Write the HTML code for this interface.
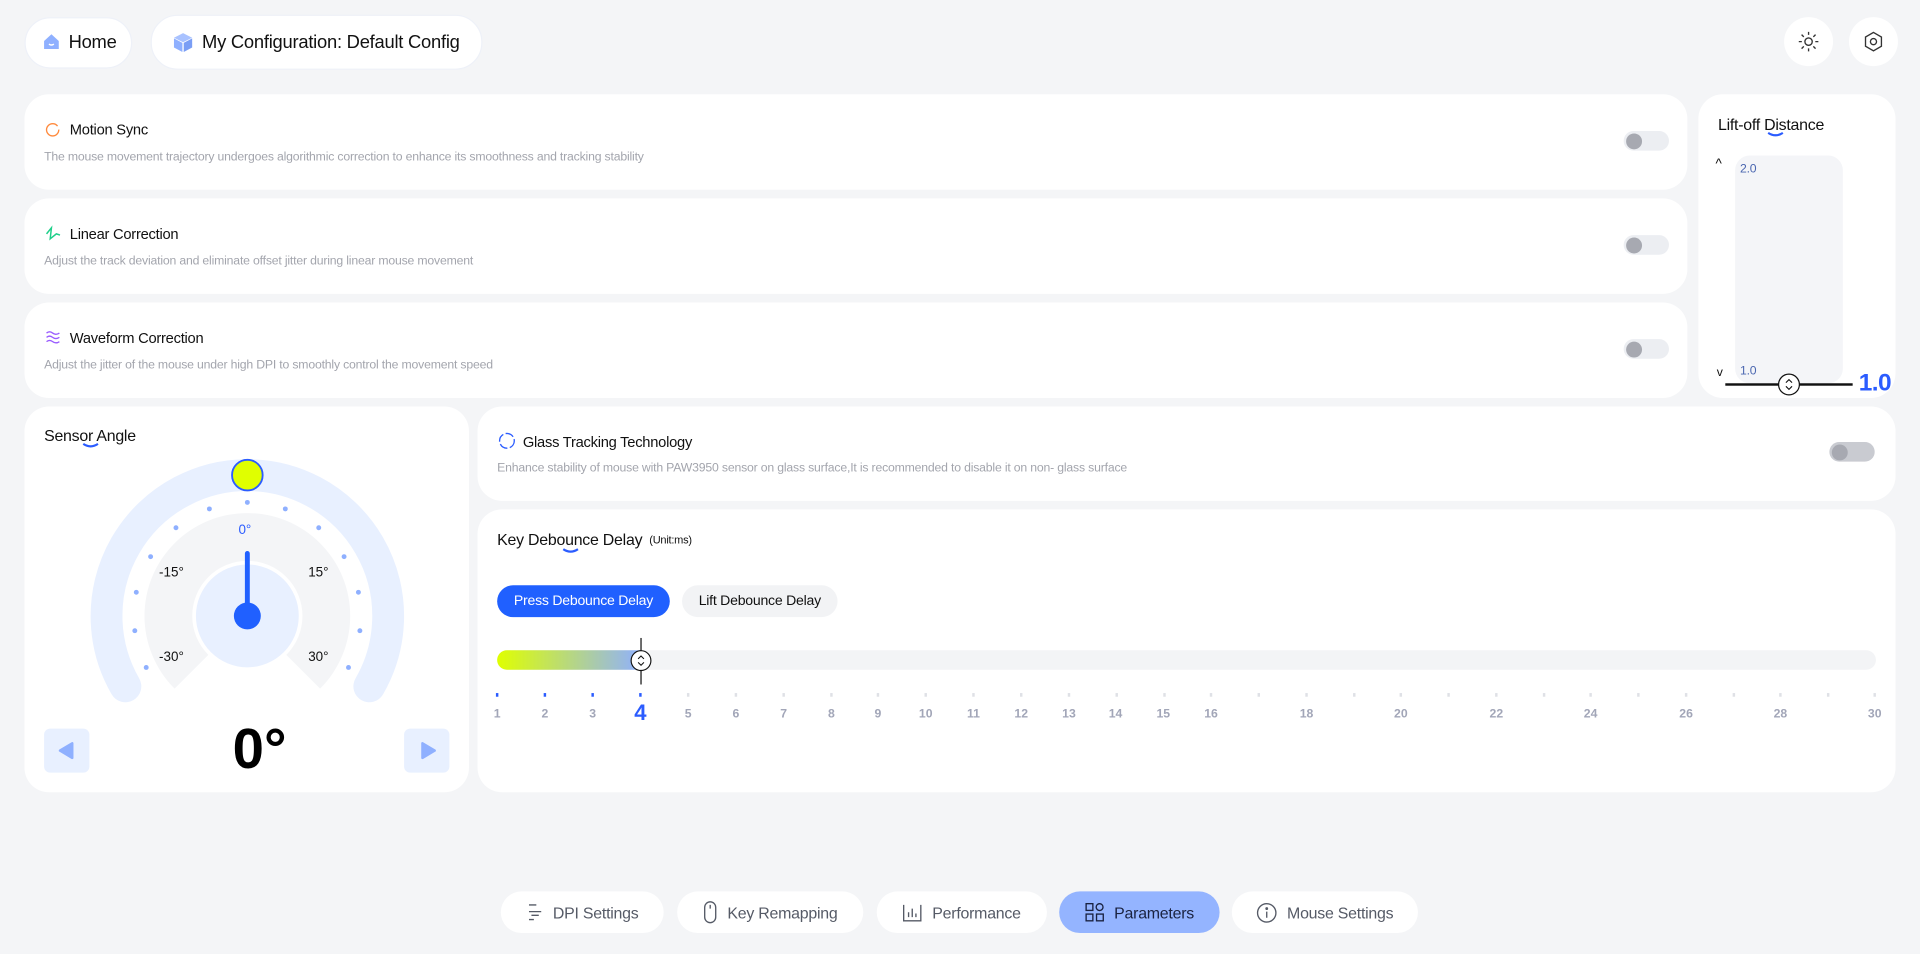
<!DOCTYPE html>
<html><head><meta charset="utf-8">
<style>
html,body{margin:0;padding:0;background:#f4f5f7;overflow:hidden}
body{width:1920px;height:953px}
#s{position:absolute;left:0;top:0;width:1568px;height:779px;transform:scale(1.22449);transform-origin:0 0;font-family:"Liberation Sans",sans-serif;color:#111}
.a{position:absolute}
.card{position:absolute;background:#fff;border-radius:20px}
.pill{position:absolute;background:#fff;border-radius:22px;border:1px solid #eef1f8;box-sizing:border-box}
.t{position:absolute;font-size:12px;white-space:nowrap;letter-spacing:-0.2px}
.d{position:absolute;font-size:10px;color:#a3a5ad;white-space:nowrap;letter-spacing:-0.15px}
.tg{position:absolute;width:37px;height:16px;border-radius:8px;background:#eceef2}
.tg::after{content:"";position:absolute;left:2px;top:1.5px;width:13px;height:13px;border-radius:50%;background:#a7a9b1}
.nav{position:absolute;top:728px;height:34px;background:#fff;border-radius:17px;font-size:13px;color:#555a66;display:flex;align-items:center;justify-content:center;gap:8px;letter-spacing:-0.2px}
.tk{position:absolute;top:578px;font-size:10px;font-weight:bold;color:#a2a6b8;transform:translateX(-50%)}
.tm{position:absolute;top:566px;width:1.5px;height:3px;background:#dfe1e6}
</style></head><body><div id="s">

<div class="pill" style="left:20px;top:14px;width:88px;height:42px"></div>
<svg class="a" style="left:35px;top:27px" width="14" height="14" viewBox="0 0 14 14"><path d="M7 1 L13 6.5 V13 H1 V6.5 Z" fill="#8fb0ff"/><path d="M5 9 Q7 10.5 9 9" stroke="#fff" stroke-width="1.2" fill="none"/></svg>
<div class="t" style="left:56px;top:26px;font-size:15px">Home</div>

<div class="pill" style="left:123px;top:12px;width:271px;height:45px"></div>
<svg class="a" style="left:141px;top:26px" width="17" height="17" viewBox="0 0 16 16"><path d="M8 1 L15 4.5 L8 8 L1 4.5Z" fill="#a9c2ff"/><path d="M1 5 L7.5 8.5 V15.5 L1 12Z" fill="#8fb0ff"/><path d="M15 5 L8.5 8.5 V15.5 L15 12Z" fill="#7a9ef5"/></svg>
<div class="t" style="left:165px;top:26px;font-size:15px">My Configuration: Default Config</div>

<div class="a" style="left:1457px;top:14px;width:40px;height:40px;border-radius:50%;background:#fff"></div>
<svg class="a" style="left:1467px;top:24px" width="20" height="20" viewBox="0 0 20 20" stroke="#333" stroke-width="1.1" fill="none"><circle cx="10" cy="10" r="3"/><path d="M10 2v2.5M10 15.5V18M2 10h2.5M15.5 10H18M4.3 4.3l1.8 1.8M13.9 13.9l1.8 1.8M4.3 15.7l1.8-1.8M13.9 6.1l1.8-1.8"/></svg>
<div class="a" style="left:1510px;top:14px;width:40px;height:40px;border-radius:50%;background:#fff"></div>
<svg class="a" style="left:1520px;top:24px" width="20" height="20" viewBox="0 0 20 20" stroke="#333" stroke-width="1.1" fill="none"><path d="M10 2.5 L16.5 6.25 V13.75 L10 17.5 L3.5 13.75 V6.25Z"/><circle cx="10" cy="10" r="2.5"/></svg>

<div class="card" style="left:20px;top:77px;width:1358px;height:78px"></div>
<svg class="a" style="left:37px;top:99px" width="12" height="13" viewBox="0 0 12 13"><circle cx="6" cy="7" r="5" stroke="#ff8a3d" stroke-width="1.1" fill="none" stroke-dasharray="28 3"/></svg>
<div class="t" style="left:57px;top:99px">Motion Sync</div>
<div class="d" style="left:36px;top:123px">The mouse movement trajectory undergoes algorithmic correction to enhance its smoothness and tracking stability</div>
<div class="tg" style="left:1326px;top:107px"></div>

<div class="card" style="left:20px;top:162px;width:1358px;height:78px"></div>
<svg class="a" style="left:37px;top:184px" width="13" height="13" viewBox="0 0 13 13" stroke="#1fcf8a" stroke-width="1.2" fill="none"><path d="M1 7 L5 2 L4 11 L9 7 L12 8"/></svg>
<div class="t" style="left:57px;top:184px">Linear Correction</div>
<div class="d" style="left:36px;top:208px">Adjust the track deviation and eliminate offset jitter during linear mouse movement</div>
<div class="tg" style="left:1326px;top:192px"></div>

<div class="card" style="left:20px;top:247px;width:1358px;height:78px"></div>
<svg class="a" style="left:37px;top:269px" width="13" height="13" viewBox="0 0 13 13" stroke="#9a5cff" stroke-width="1.1" fill="none"><path d="M1 3 Q3.5 1 6 3 T11.5 3M1 6.5 Q3.5 4.5 6 6.5 T11.5 6.5M1 10 Q3.5 8 6 10 T11.5 10"/></svg>
<div class="t" style="left:57px;top:269px">Waveform Correction</div>
<div class="d" style="left:36px;top:293px">Adjust the jitter of the mouse under high DPI to smoothly control the movement speed</div>
<div class="tg" style="left:1326px;top:277px"></div>

<div class="card" style="left:1387px;top:77px;width:161px;height:248px"></div>
<div class="t" style="left:1403px;top:94px;font-size:13px">Lift-off Distance</div>
<svg class="a" style="left:1442px;top:107px" width="16" height="6"><path d="M2 1.5 Q8 5.5 14 1.5" stroke="#2b5cff" stroke-width="1.8" fill="none"/></svg>
<div class="a" style="left:1417px;top:127px;width:88px;height:186px;background:#f4f5f8;border-radius:12px"></div>
<div class="t" style="left:1401px;top:128px;font-size:11px">^</div>
<div class="t" style="left:1402px;top:299px;font-size:10px">v</div>
<div class="t" style="left:1421px;top:133px;font-size:10px;color:#4a66b0">2.0</div>
<div class="t" style="left:1421px;top:298px;font-size:10px;color:#4a66b0">1.0</div>
<div class="a" style="left:1409px;top:313px;width:104px;height:1.5px;background:#111"></div>
<svg class="a" style="left:1451px;top:304px" width="20" height="20" viewBox="0 0 20 20"><circle cx="10" cy="10" r="8.5" fill="#fff" stroke="#111" stroke-width="1"/><path d="M7.5 8.5 L10 6 L12.5 8.5M7.5 11.5 L10 14 L12.5 11.5" stroke="#111" stroke-width="0.9" fill="none"/></svg>
<div class="t" style="left:1518px;top:302px;font-size:20px;font-weight:bold;color:#2b5cff;letter-spacing:-0.5px">1.0</div>

<div class="card" style="left:20px;top:332px;width:363px;height:315px"></div>
<div class="t" style="left:36px;top:348px;font-size:13px">Sensor Angle</div>
<svg class="a" style="left:66px;top:361px" width="16" height="6"><path d="M2 1.5 Q8 5.5 14 1.5" stroke="#2b5cff" stroke-width="1.8" fill="none"/></svg>
<svg class="a" style="left:0;top:0" width="400" height="650">
<path d="M102.4 560.5 A115 115 0 1 1 301.6 560.5" stroke="#e8f0ff" stroke-width="26" stroke-linecap="round" fill="none"/>
<path d="M202 503 L142.6 562.4 A84 84 0 1 1 261.4 562.4 Z" fill="#f4f5f7"/>
<circle cx="202" cy="503" r="45" fill="#fff"/>
<circle cx="202" cy="503" r="42" fill="#e8f0ff"/>
<g fill="#8fb0ff">
<circle cx="202" cy="410.3" r="2"/>
<circle cx="171" cy="415.6" r="2"/><circle cx="233" cy="415.6" r="2"/>
<circle cx="143.7" cy="431" r="2"/><circle cx="260.3" cy="431" r="2"/>
<circle cx="123" cy="454.6" r="2"/><circle cx="281" cy="454.6" r="2"/>
<circle cx="111.3" cy="483.7" r="2"/><circle cx="292.7" cy="483.7" r="2"/>
<circle cx="110.1" cy="515.1" r="2"/><circle cx="293.9" cy="515.1" r="2"/>
<circle cx="119.4" cy="545.1" r="2"/><circle cx="284.6" cy="545.1" r="2"/>
</g>
<line x1="202" y1="503" x2="202" y2="452" stroke="#2060ff" stroke-width="4" stroke-linecap="round"/>
<circle cx="202" cy="503" r="11" fill="#2060ff"/>
<circle cx="202" cy="388" r="12.5" fill="#e0ff00" stroke="#2b5cff" stroke-width="1.5"/>
<g font-family="Liberation Sans, sans-serif" font-size="11" text-anchor="middle">
<text x="200" y="436" fill="#2b5cff">0°</text>
<text x="140" y="471" fill="#111">-15°</text>
<text x="260" y="471" fill="#111">15°</text>
<text x="140" y="540" fill="#111">-30°</text>
<text x="260" y="540" fill="#111">30°</text>
<text x="212" y="627" font-size="46" font-weight="bold" fill="#000">0°</text>
</g>
</svg>
<div class="a" style="left:36px;top:595px;width:37px;height:36px;border-radius:5px;background:#e8f0ff"></div>
<svg class="a" style="left:46px;top:605px" width="16" height="16"><path d="M13 2 L13 14 L3 8Z" fill="#8fb0ff" stroke="#8fb0ff" stroke-linejoin="round" stroke-width="2"/></svg>
<div class="a" style="left:330px;top:595px;width:37px;height:36px;border-radius:5px;background:#e8f0ff"></div>
<svg class="a" style="left:342px;top:605px" width="16" height="16"><path d="M3 2 L3 14 L13 8Z" fill="#8fb0ff" stroke="#8fb0ff" stroke-linejoin="round" stroke-width="2"/></svg>

<div class="card" style="left:390px;top:332px;width:1158px;height:77px"></div>
<svg class="a" style="left:407px;top:353px" width="14" height="14" viewBox="0 0 14 14"><circle cx="7" cy="7" r="6" stroke="#2b5cff" stroke-width="1.1" fill="none" stroke-dasharray="7 2"/></svg>
<div class="t" style="left:427px;top:354px">Glass Tracking Technology</div>
<div class="d" style="left:406px;top:377px">Enhance stability of mouse with PAW3950 sensor on glass surface,It is recommended to disable it on non- glass surface</div>
<div class="tg" style="left:1494px;top:361px;background:#c9cbd1"></div>

<div class="card" style="left:390px;top:416px;width:1158px;height:231px"></div>
<div class="t" style="left:406px;top:433px;font-size:13px">Key Debounce Delay <span style="font-size:9px;position:relative;top:-1px">&nbsp;(Unit:ms)</span></div>
<svg class="a" style="left:458px;top:447px" width="16" height="6"><path d="M2 1.5 Q8 5.5 14 1.5" stroke="#2b5cff" stroke-width="1.8" fill="none"/></svg>
<div class="a" style="left:406px;top:478px;width:141px;height:26px;border-radius:13px;background:#2060ff;color:#fff;font-size:11.5px;text-align:center;line-height:26px;letter-spacing:-0.2px">Press Debounce Delay</div>
<div class="a" style="left:557px;top:478px;width:127px;height:26px;border-radius:13px;background:#f2f3f5;color:#111;font-size:11.5px;text-align:center;line-height:26px;letter-spacing:-0.2px">Lift Debounce Delay</div>
<div class="a" style="left:406px;top:531px;width:1126px;height:16px;border-radius:8px;background:#f3f4f6"></div>
<div class="a" style="left:406px;top:531px;width:118px;height:16px;border-radius:8px 0 0 8px;background:linear-gradient(90deg,#dfff00,#8fb0ff)"></div>
<div class="a" style="left:522.5px;top:521px;width:1.5px;height:38px;background:#111"></div>
<svg class="a" style="left:514px;top:530px" width="19" height="19" viewBox="0 0 20 20"><circle cx="10" cy="10" r="8.5" fill="#fff" stroke="#111" stroke-width="1"/><path d="M7.5 8.5 L10 6 L12.5 8.5M7.5 11.5 L10 14 L12.5 11.5" stroke="#111" stroke-width="0.9" fill="none"/></svg>

<div class="tm" style="left:405px;background:#2b5cff"></div><div class="tm" style="left:444px;background:#2b5cff"></div><div class="tm" style="left:483px;background:#2b5cff"></div><div class="tm" style="left:522px;background:#2b5cff"></div>
<div class="tm" style="left:561px"></div><div class="tm" style="left:600px"></div><div class="tm" style="left:639px"></div><div class="tm" style="left:678px"></div><div class="tm" style="left:716px"></div><div class="tm" style="left:755px"></div><div class="tm" style="left:794px"></div><div class="tm" style="left:833px"></div><div class="tm" style="left:872px"></div><div class="tm" style="left:911px"></div><div class="tm" style="left:950px"></div><div class="tm" style="left:988px"></div><div class="tm" style="left:1027px"></div><div class="tm" style="left:1066px"></div><div class="tm" style="left:1105px"></div><div class="tm" style="left:1143px"></div><div class="tm" style="left:1182px"></div><div class="tm" style="left:1221px"></div><div class="tm" style="left:1260px"></div><div class="tm" style="left:1298px"></div><div class="tm" style="left:1337px"></div><div class="tm" style="left:1376px"></div><div class="tm" style="left:1415px"></div><div class="tm" style="left:1453px"></div><div class="tm" style="left:1492px"></div><div class="tm" style="left:1530px"></div>

<div class="tk" style="left:406px">1</div><div class="tk" style="left:445px">2</div><div class="tk" style="left:484px">3</div>
<div class="tk" style="left:523px;top:572px;font-size:18px;color:#2b5cff">4</div>
<div class="tk" style="left:562px">5</div><div class="tk" style="left:601px">6</div><div class="tk" style="left:640px">7</div><div class="tk" style="left:679px">8</div><div class="tk" style="left:717px">9</div><div class="tk" style="left:756px">10</div><div class="tk" style="left:795px">11</div><div class="tk" style="left:834px">12</div><div class="tk" style="left:873px">13</div><div class="tk" style="left:911px">14</div><div class="tk" style="left:950px">15</div><div class="tk" style="left:989px">16</div>
<div class="tk" style="left:1067px">18</div><div class="tk" style="left:1144px">20</div><div class="tk" style="left:1222px">22</div><div class="tk" style="left:1299px">24</div><div class="tk" style="left:1377px">26</div><div class="tk" style="left:1454px">28</div><div class="tk" style="left:1531px">30</div>

<div class="nav" style="left:409px;width:133px"><svg width="14" height="16" viewBox="0 0 14 16" stroke="#555a66" stroke-width="1.1" fill="none"><path d="M2 2h6M2 7.5h10M4 10.5h6M2 14h4"/></svg>DPI Settings</div>
<div class="nav" style="left:553px;width:152px"><svg width="12" height="20" viewBox="0 0 12 20" stroke="#555a66" stroke-width="1.1" fill="none"><rect x="1.5" y="1.5" width="9" height="17" rx="4.5"/><path d="M6 4v3"/></svg>Key Remapping</div>
<div class="nav" style="left:716px;width:139px"><svg width="16" height="16" viewBox="0 0 16 16" stroke="#555a66" stroke-width="1.1" fill="none"><path d="M1 2v13h14V2M5 12V8M8 12V5M11 12V9"/></svg>Performance</div>
<div class="nav" style="left:865px;width:131px;background:#94b4ff;color:#1a2240"><svg width="16" height="16" viewBox="0 0 16 16" stroke="#1a2240" stroke-width="1.1" fill="none"><rect x="1" y="1" width="5.5" height="5.5"/><circle cx="12" cy="3.8" r="2.8"/><rect x="1" y="9.5" width="5.5" height="5.5"/><rect x="9.5" y="9.5" width="5.5" height="5.5"/></svg>Parameters</div>
<div class="nav" style="left:1006px;width:152px"><svg width="17" height="17" viewBox="0 0 17 17" stroke="#555a66" stroke-width="1.1" fill="none"><circle cx="8.5" cy="8.5" r="7.5"/><path d="M8.5 7.5v5"/><circle cx="8.5" cy="5" r="0.6" fill="#555a66"/></svg>Mouse Settings</div>

</div></body></html>
